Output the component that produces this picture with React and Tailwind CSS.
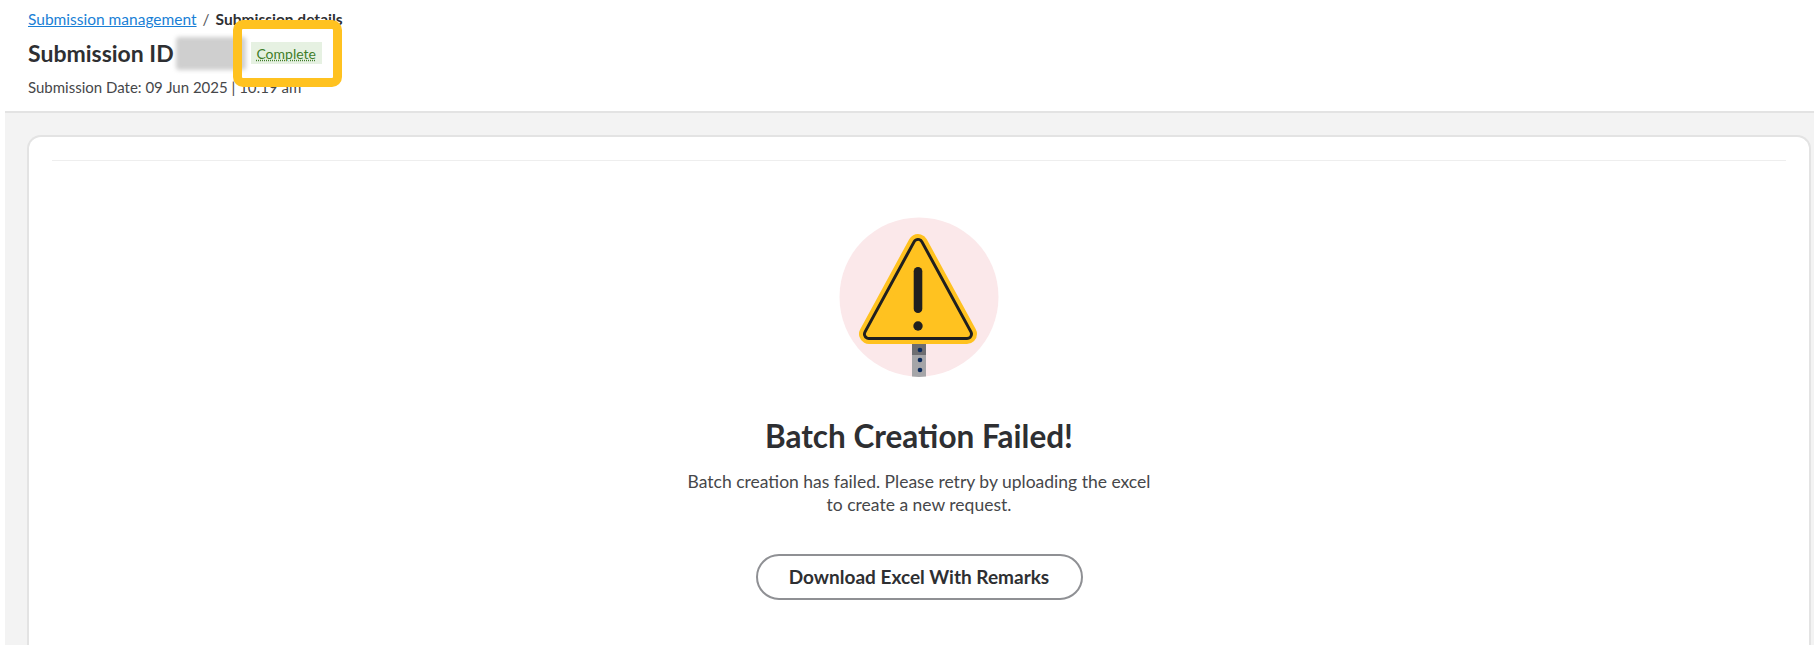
import React from "react";

const WarningSign = () => (
  <svg width="160" height="160" viewBox="0 0 160 160" className="block">
    <circle cx="80" cy="80" r="79.5" fill="#fbe8ea" />
    <path d="M73 127h14v32.6q-7 .6-14 0z" fill="#a5a5a8" />
    <rect x="73" y="127" width="14" height="11" fill="#6e6e72" />
    <circle cx="81" cy="133" r="2.3" fill="#0b2a5c" />
    <circle cx="81" cy="143" r="2.3" fill="#0b2a5c" />
    <circle cx="81" cy="153" r="2.3" fill="#0b2a5c" />
    <path d="M79 27 L30 117 H128 Z" fill="#ffc220" stroke="#ffc220" strokeWidth="20" strokeLinejoin="round" />
    <path d="M79 27 L30 117 H128 Z" fill="#ffc220" stroke="#1f1f1f" strokeWidth="12" strokeLinejoin="round" />
    <path d="M79 27 L30 117 H128 Z" fill="#ffc220" stroke="#ffc220" strokeWidth="6" strokeLinejoin="round" />
    <rect x="74.7" y="50" width="8.6" height="46" rx="4.3" fill="#1f1f1f" />
    <circle cx="79" cy="109" r="4.7" fill="#1f1f1f" />
  </svg>
);

export default function App() {
  return (
    <div className="relative h-[645px] overflow-hidden bg-white font-['Lato','Liberation_Sans',sans-serif] text-[#2e2f32]">
      {/* Header */}
      <header className="h-[113px] bg-white border-b-2 border-[#e3e3e3] ml-[5px] pl-[23px] pt-[9px]">
        <nav className="flex items-center gap-[6px] text-[15.5px] leading-[20px]">
          <a href="#" className="text-[#1a7fd6] underline">Submission management</a>
          <span className="text-[#55565a]">/</span>
          <span className="font-bold">Submission details</span>
        </nav>
        <div className="flex items-center mt-[6px] h-[36px]">
          <h1 className="text-[23px] font-bold leading-[28px]">Submission ID</h1>
          <div className="w-[70px] h-[33px] ml-[2px] bg-[#cfcfcf] rounded-[3px] blur-[2px]" />
          <span className="ml-[5px] w-[71px] h-[22px] flex items-center justify-center bg-[#e6f1e2] text-[#3f7d2a] text-[14px] underline decoration-dotted">
            Complete
          </span>
        </div>
        <p className="mt-[6px] text-[15px] leading-[20px] text-[#46474a]">
          Submission Date: 09 Jun 2025 | 10:19 am
        </p>
      </header>

      {/* Body */}
      <main className="ml-[5px] h-[532px] bg-[#f3f3f3] pl-[22px] pr-[3px] pt-[22px]">
        <section className="h-full bg-white border-2 border-b-0 border-[#e3e3e3] rounded-t-[14px] px-[23px] pt-[23px]">
          <hr className="border-[#eeeeee]" />
          <div className="flex flex-col items-center pt-[56px]">
            <WarningSign />
            <h2 className="mt-[40px] text-[31.5px] leading-[38px] font-bold text-[#2e2f32]">
              Batch Creation Failed!
            </h2>
            <p className="mt-[15px] w-[520px] text-center text-[17.5px] leading-[23px] text-[#46474a]">
              Batch creation has failed. Please retry by uploading the excel
              <br />
              to create a new request.
            </p>
            <button
              type="button"
              className="mt-[38px] w-[327px] h-[46px] rounded-full border-2 border-[#8f9094] bg-white text-[19px] font-bold text-[#2e2f32]"
            >
              Download Excel With Remarks
            </button>
          </div>
        </section>
      </main>

      {/* Highlight annotation */}
      <div className="absolute left-[233px] top-[20px] w-[109px] h-[67px] border-[9px] border-[#ffc220] rounded-[10px]" />
    </div>
  );
}
